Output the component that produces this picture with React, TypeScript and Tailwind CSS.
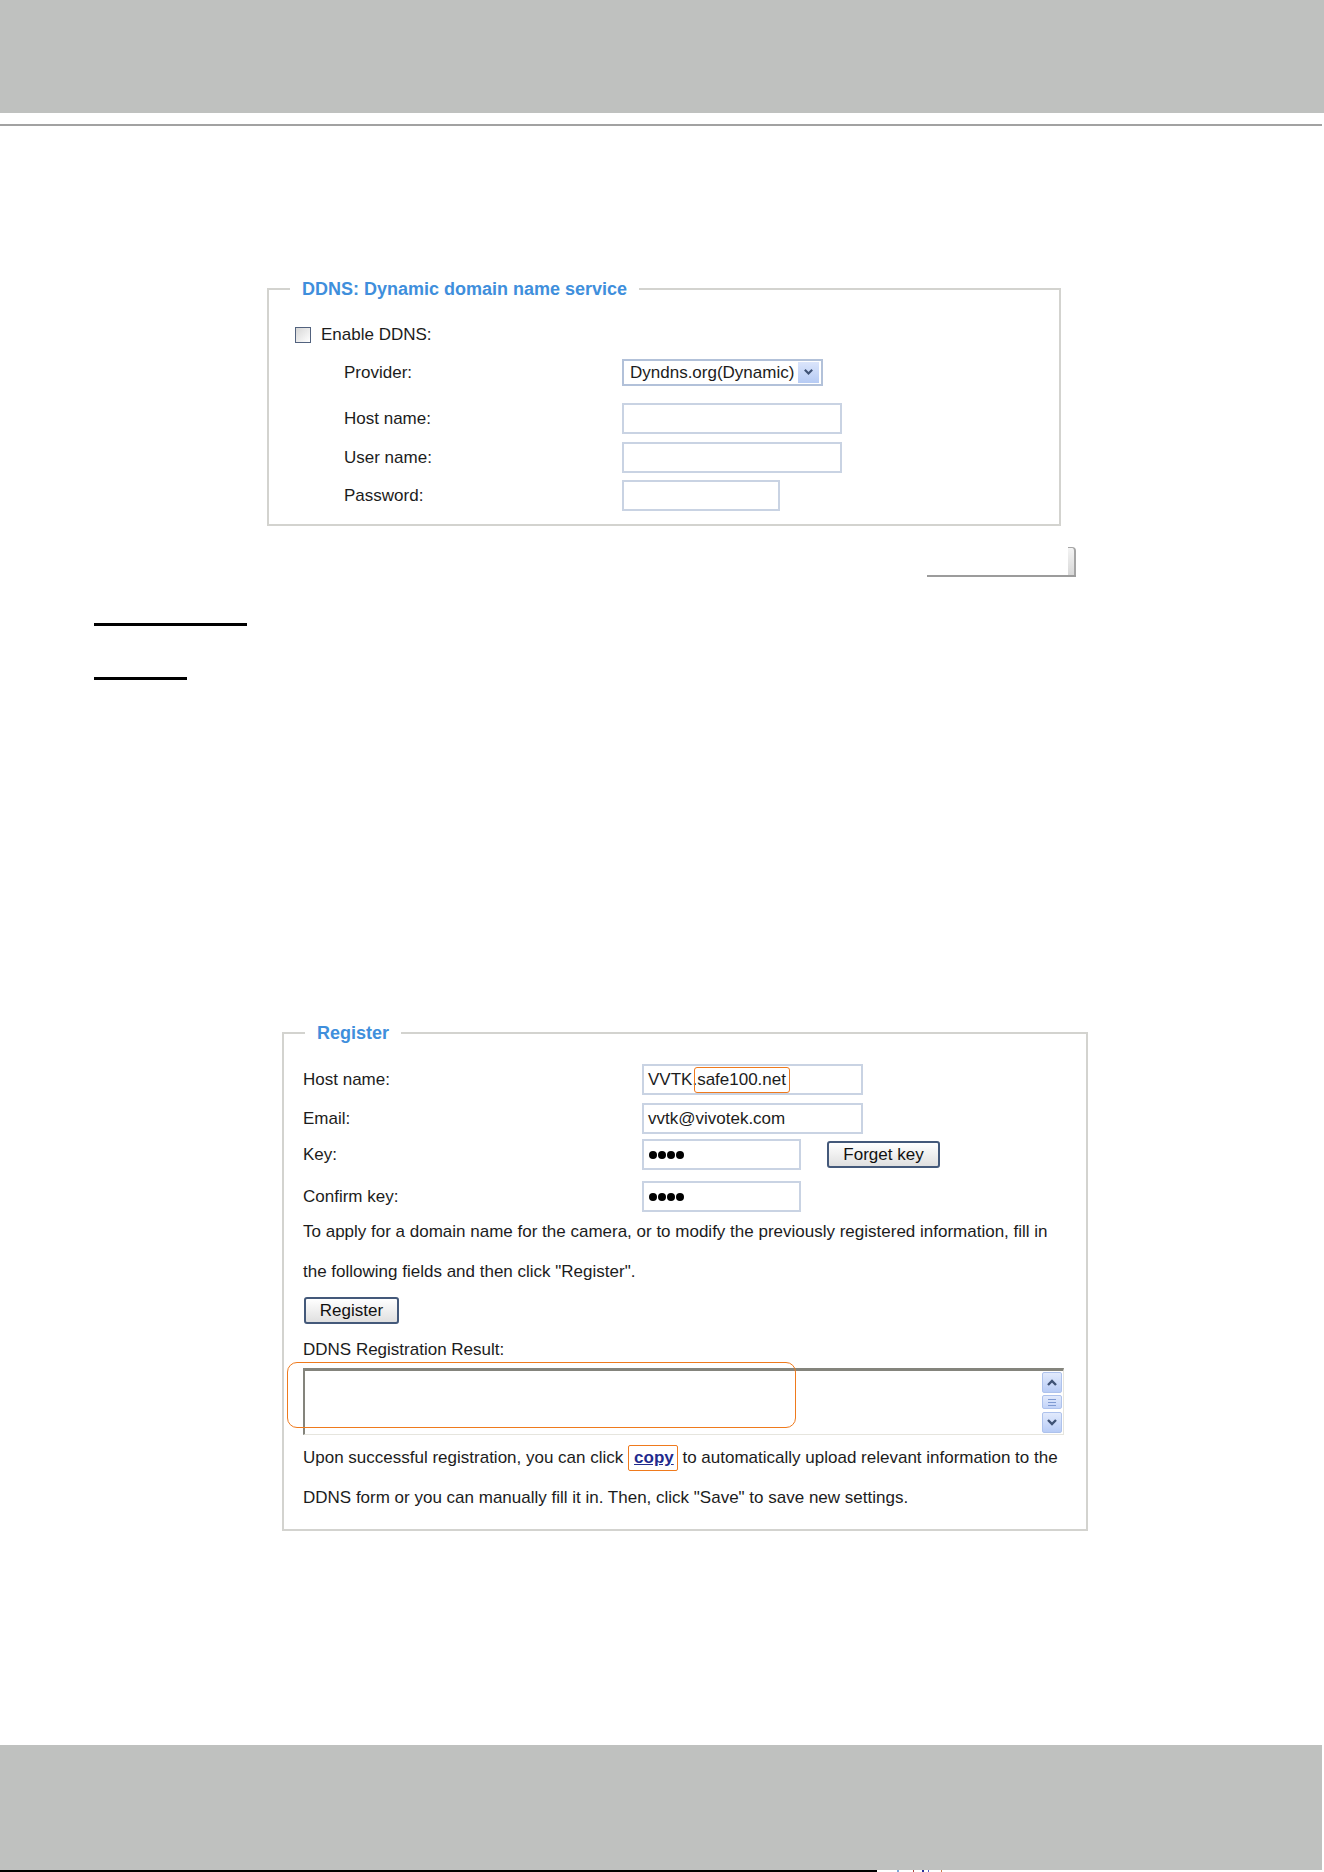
import React from 'react';

// Shared bits for the DDNS settings page
const Legend = ({ children }: { children: React.ReactNode }) => (
  <legend className="ml-[21px] px-[12px] text-[18px] leading-[20px] font-bold text-[#3f8fdc]">
    {children}
  </legend>
);

const TextBox = ({ width, children }: { width: string; children?: React.ReactNode }) => (
  <div className={`${width} h-[31px] border-2 border-[#c9d3e3] bg-white flex items-center pl-[4px] whitespace-nowrap`}>
    {children}
  </div>
);

const PushButton = ({ width, children }: { width: string; children: React.ReactNode }) => (
  <div
    className={`${width} h-[27px] rounded-[3px] border-2 border-[#44597a] bg-linear-to-b from-white to-[#e0e0e0] flex items-center justify-center text-[#111]`}
  >
    {children}
  </div>
);

const Dots = () => (
  <div className="flex items-center gap-[1px] pl-[1px]">
    <span className="w-[8px] h-[8px] rounded-full bg-black" />
    <span className="w-[8px] h-[8px] rounded-full bg-black" />
    <span className="w-[8px] h-[8px] rounded-full bg-black" />
    <span className="w-[8px] h-[8px] rounded-full bg-black" />
  </div>
);

const Chevron = ({ up = false, size = 11 }: { up?: boolean; size?: number }) => (
  <svg width={size} height={size * 0.75} viewBox="0 0 12 9">
    <path
      d={up ? 'M2 7 L6 3 L10 7' : 'M2 2 L6 6 L10 2'}
      fill="none"
      stroke="#3f5275"
      strokeWidth="2.4"
    />
  </svg>
);

const ScrollButton = ({ up = false }: { up?: boolean }) => (
  <div className="h-[21px] rounded-[2px] border border-[#aec2ec] bg-linear-to-b from-[#e2eafc] to-[#b8ccf6] flex items-center justify-center">
    <Chevron up={up} size={12} />
  </div>
);

export default function App() {
  return (
    <div className="w-[1324px] h-[1872px] bg-white flex flex-col overflow-hidden font-['Liberation_Sans',Arial,sans-serif] text-[17px] text-[#1c1c1c]">
      {/* top band */}
      <div className="h-[113px] w-full bg-[#bfc1bf]" />
      <div className="mt-[11px] h-[2px] w-[1322px] bg-[#a2a2a2]" />

      {/* DDNS settings */}
      <fieldset className="mt-[153px] ml-[267px] w-[794px] border-2 border-[#d3d3cf]">
        <Legend>DDNS: Dynamic domain name service</Legend>

        <div className="pl-[26px] pb-[13px]">
          <div className="mt-[28px] h-[16px] flex items-center gap-[10px]">
            <span className="w-[16px] h-[16px] border-[1.5px] border-[#52627e] bg-linear-to-br from-[#d6d6d6] to-white" />
            <span className="leading-[20px]">Enable DDNS:</span>
          </div>

          <div className="mt-[16px] ml-[49px] flex items-center">
            <span className="w-[278px]">Provider:</span>
            <div className="w-[201px] h-[27px] border-2 border-[#b2c1d9] bg-white flex items-center justify-between pl-[6px] pr-[2px]">
              <span className="whitespace-nowrap">Dyndns.org(Dynamic)</span>
              <span className="w-[21px] h-[21px] bg-linear-to-b from-[#dbe5fb] to-[#b6cbf4] flex items-center justify-center">
                <Chevron />
              </span>
            </div>
          </div>

          <div className="mt-[17px] ml-[49px] flex items-center">
            <span className="w-[278px]">Host name:</span>
            <TextBox width="w-[220px]" />
          </div>
          <div className="mt-[8px] ml-[49px] flex items-center">
            <span className="w-[278px]">User name:</span>
            <TextBox width="w-[220px]" />
          </div>
          <div className="mt-[7px] ml-[49px] flex items-center">
            <span className="w-[278px]">Password:</span>
            <TextBox width="w-[158px]" />
          </div>
        </div>
      </fieldset>

      {/* save button edge */}
      <div className="mt-[21px] ml-[927px] w-[149px] h-[30px] border-b-2 border-[#9c9c9c] flex justify-end">
        <div className="w-[8px] h-full rounded-tr-[4px] border-r-2 border-t-[1.5px] border-[#a5a5a5] bg-linear-to-b from-[#f4f4f4] to-[#d8d8d8]" />
      </div>

      <div className="mt-[46px] ml-[94px] w-[153px] h-[3px] bg-black" />
      <div className="mt-[51px] ml-[94px] w-[93px] h-[3px] bg-black" />

      {/* Register */}
      <fieldset className="mt-[343px] ml-[282px] w-[806px] border-2 border-[#d3d3cf]">
        <Legend>Register</Legend>

        <div className="pl-[19px] pb-[11px]">
          <div className="mt-[21px] flex items-center">
            <span className="w-[339px]">Host name:</span>
            <TextBox width="w-[221px]">
              VVTK.
              <span className="inline-block -ml-[3px] pl-[2px] pr-[3px] leading-[24px] border-[1.5px] border-[#ef7a1d] rounded-[3px]">
                safe100.net
              </span>
            </TextBox>
          </div>
          <div className="mt-[8px] flex items-center">
            <span className="w-[339px]">Email:</span>
            <TextBox width="w-[221px]">vvtk@vivotek.com</TextBox>
          </div>
          <div className="mt-[5px] flex items-center">
            <span className="w-[339px]">Key:</span>
            <TextBox width="w-[159px]">
              <Dots />
            </TextBox>
            <div className="ml-[26px]">
              <PushButton width="w-[113px]">Forget key</PushButton>
            </div>
          </div>
          <div className="mt-[11px] flex items-center">
            <span className="w-[339px]">Confirm key:</span>
            <TextBox width="w-[159px]">
              <Dots />
            </TextBox>
          </div>

          <p className="leading-[40px] whitespace-nowrap">
            To apply for a domain name for the camera, or to modify the previously registered information, fill in
            <br />
            the following fields and then click "Register".
          </p>

          <div className="mt-[5px] ml-[1px]">
            <PushButton width="w-[95px]">Register</PushButton>
          </div>

          <p className="mt-[16px] leading-[20px]">DDNS Registration Result:</p>

          <div className="relative mt-[8px] w-[761px] h-[67px] bg-white border-t-[3px] border-l-[2px] border-[#84847c] border-r border-b border-r-[#e6e5de] border-b-[#e6e5de] flex justify-end pt-[1px] pb-[1px] pr-[1px]">
            <div className="w-[20px] flex flex-col">
              <ScrollButton up />
              <div className="mt-[2px] h-[14px] rounded-[2px] border border-[#aec2ec] bg-linear-to-b from-[#e2eafc] to-[#c2d3f8] flex flex-col items-center justify-center gap-[2px]">
                <span className="w-[8px] h-px bg-[#7f9ad2]" />
                <span className="w-[8px] h-px bg-[#7f9ad2]" />
                <span className="w-[8px] h-px bg-[#7f9ad2]" />
              </div>
              <div className="mt-[3px]">
                <ScrollButton />
              </div>
            </div>
            <div className="absolute -left-[18px] -top-[9px] w-[509px] h-[66px] rounded-[10px] border-[1.5px] border-[#ef7a1d]" />
          </div>

          <p className="mt-[3px] leading-[40px] whitespace-nowrap">
            Upon successful registration, you can click{' '}
            <span className="inline-block leading-[24px] pl-[5px] pr-[3px] border-[1.5px] border-[#ef7a1d] rounded-[2px]">
              <span className="font-bold underline text-[#1f2b8e]">copy</span>
            </span>{' '}
            to automatically upload relevant information to the
            <br />
            DDNS form or you can manually fill it in. Then, click "Save" to save new settings.
          </p>
        </div>
      </fieldset>

      {/* bottom band */}
      <div className="mt-auto h-[125px] w-[1322px] bg-[#bfc1bf]" />
      <div className="h-[2px] flex">
        <div className="w-[877px] bg-black" />
        <div className="ml-[20px] w-[2px] bg-[#7da6d8]" />
        <div className="ml-[14px] w-[1px] bg-[#b0413e]" />
        <div className="ml-[8px] w-[2px] bg-[#2b2f9a]" />
        <div className="ml-[4px] w-[1px] bg-[#5a5fbf]" />
        <div className="ml-[12px] w-[1px] bg-[#d07a4a]" />
      </div>
    </div>
  );
}
